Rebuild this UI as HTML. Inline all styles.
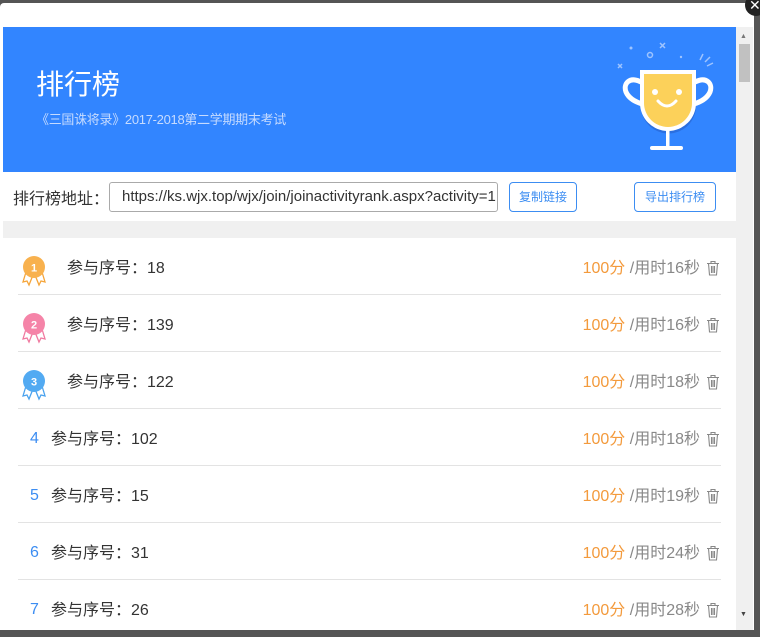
<!DOCTYPE html>
<html><head><meta charset="utf-8"><style>
*{margin:0;padding:0;box-sizing:border-box}
html,body{width:760px;height:630px}
body{background:#555;position:relative;overflow:hidden;font-family:"Liberation Sans","Noto Sans CJK SC",sans-serif}
.dlg{position:absolute;left:0;top:3px;width:754px;height:627px;background:#fff;border-radius:4px 4px 0 0}
.hdr{position:absolute;left:3px;top:27px;width:733px;height:145px;background:#3285ff}
.t1{position:absolute;left:33px;top:36px;color:#fff;font-size:28px}
.t2{position:absolute;left:33px;top:82px;color:#c6dbff;font-size:13px;letter-spacing:-0.3px}
.tb{position:absolute;left:13px;top:185px;font-size:16px;color:#333}
.inp{position:absolute;left:109px;top:182px;width:389px;height:30px;border:1px solid #aaa;border-radius:3px;font-size:15px;line-height:28px;color:#333;padding:0 0 0 12px;white-space:nowrap;overflow:hidden}
.btn{position:absolute;top:182px;height:30px;border:1px solid #3c8df2;border-radius:4px;color:#3c8df2;font-size:12px;text-align:center;line-height:28px}
.strip{position:absolute;left:3px;top:221px;width:733px;height:17px;background:#f0f0f0}
.sb{position:absolute;left:736px;top:27px;width:17px;height:603px;background:#f0f0f0}
.row{position:absolute;left:18px;width:703px;height:57px;border-bottom:1px solid #e3e3e3}
.nm{position:absolute;top:16px;font-size:16px;color:#333}
.num{position:absolute;left:12px;top:21px;font-size:16px;color:#3c8df2}
.sc{position:absolute;right:21px;top:16px;font-size:16px;color:#888}
.sc b{font-weight:normal;color:#f39a3c}
.tr{position:absolute;right:1px;top:22px;font-size:0}
.md{position:absolute;left:3px;top:16px}
</style></head><body>
<div class="dlg"></div>
<div style="position:absolute;left:745px;top:-6px;width:22px;height:22px;border-radius:50%;background:#222;color:#fff;font-size:14px;line-height:22px;padding-left:4px">✕</div>
<div class="hdr">
<div class="t1">排行榜</div>
<div class="t2">《三国诛将录》2017-2018第二学期期末考试</div>
<svg style="position:absolute;left:600px;top:10px" width="120" height="130" viewBox="600 37 120 130">
<g fill="none" stroke="#9ec4ff" stroke-width="1.5"><circle cx="647" cy="55" r="2.5"/><path d="M657 43l5 5M662 43l-5 5M615 64l4 4M619 64l-4 4M697 60l3-6M702 62l5-5M704 66l6-3"/></g>
<circle cx="628" cy="48" r="1.5" fill="#9ec4ff"/><circle cx="678" cy="57" r="1.2" fill="#9ec4ff"/>
<path d="M638 68h55v35a27.5 27.5 0 0 1-55 0z" fill="#2b6fe0" transform="translate(0 3)"/>
<path d="M638 82c-12-6-18 2-15 10 3 7 10 10 16 12M692 82c12-6 18 2 15 10-3 7-10 10-16 12" fill="none" stroke="#fff" stroke-width="5" stroke-linecap="round"/>
<path d="M637 70h56v33a28 28 0 0 1-56 0z" fill="#fff"/>
<path d="M641 74h48v29a24 24 0 0 1-48 0z" fill="#fcd15a"/>
<circle cx="652" cy="92" r="3" fill="#fff"/><circle cx="676" cy="92" r="3" fill="#fff"/>
<path d="M655 101q9 10 18 0" fill="none" stroke="#fff" stroke-width="3" stroke-linecap="round"/>
<rect x="663" y="130" width="3.5" height="18" fill="#fff"/><rect x="647" y="146" width="33" height="4" rx="2" fill="#fff"/>
</svg>
</div>
<div class="tb">排行榜地址：</div>
<div class="inp">https://ks.wjx.top/wjx/join/joinactivityrank.aspx?activity=1</div>
<div class="btn" style="left:509px;width:68px">复制链接</div>
<div class="btn" style="left:634px;width:82px">导出排行榜</div>
<div class="strip"></div>
<div class="sb"><div style="position:absolute;left:3px;top:17px;width:11px;height:38px;background:#c1c1c1"></div>
<div style="position:absolute;left:4px;top:6px;font-size:7px;color:#777">▲</div>
<div style="position:absolute;left:4px;top:584px;font-size:7px;color:#444">▼</div></div>
<svg width="0" height="0" style="position:absolute"><defs><symbol id="bin" viewBox="0 0 14 16"><path d="M1 3.5h12M5 3.5V1.5h4v2M2.5 3.5l1 11.5h7l1-11.5M5.5 6v7M7 6v7M8.5 6v7" fill="none" stroke="#888" stroke-width="1.1"/></symbol></defs></svg>

<div class="row" style="top:238px"><svg class="md" width="26" height="34" viewBox="0 0 26 34"><path d="M5 18l-3 10 4-1 2 4 4-10M21 18l3 10-4-1-2 4-4-10" fill="none" stroke="#f5a53a" stroke-width="1.3"/><circle cx="13" cy="13" r="11" fill="#f8b14e"/><text x="13" y="17.5" font-size="11" fill="#fff" text-anchor="middle" font-weight="bold" font-family="Liberation Sans">1</text></svg><span class="nm" style="left:49px">参与序号：18</span><span class="sc"><b>100分</b> /用时16秒</span><span class="tr"><svg width="14" height="16"><use href="#bin"/></svg></span></div>
<div class="row" style="top:295px"><svg class="md" width="26" height="34" viewBox="0 0 26 34"><path d="M5 18l-3 10 4-1 2 4 4-10M21 18l3 10-4-1-2 4-4-10" fill="none" stroke="#f07aa0" stroke-width="1.3"/><circle cx="13" cy="13" r="11" fill="#f584a8"/><text x="13" y="17.5" font-size="11" fill="#fff" text-anchor="middle" font-weight="bold" font-family="Liberation Sans">2</text></svg><span class="nm" style="left:49px">参与序号：139</span><span class="sc"><b>100分</b> /用时16秒</span><span class="tr"><svg width="14" height="16"><use href="#bin"/></svg></span></div>
<div class="row" style="top:352px"><svg class="md" width="26" height="34" viewBox="0 0 26 34"><path d="M5 18l-3 10 4-1 2 4 4-10M21 18l3 10-4-1-2 4-4-10" fill="none" stroke="#4aa2ee" stroke-width="1.3"/><circle cx="13" cy="13" r="11" fill="#52aaf2"/><text x="13" y="17.5" font-size="11" fill="#fff" text-anchor="middle" font-weight="bold" font-family="Liberation Sans">3</text></svg><span class="nm" style="left:49px">参与序号：122</span><span class="sc"><b>100分</b> /用时18秒</span><span class="tr"><svg width="14" height="16"><use href="#bin"/></svg></span></div>
<div class="row" style="top:409px"><span class="num">4</span><span class="nm" style="left:33px">参与序号：102</span><span class="sc"><b>100分</b> /用时18秒</span><span class="tr"><svg width="14" height="16"><use href="#bin"/></svg></span></div>
<div class="row" style="top:466px"><span class="num">5</span><span class="nm" style="left:33px">参与序号：15</span><span class="sc"><b>100分</b> /用时19秒</span><span class="tr"><svg width="14" height="16"><use href="#bin"/></svg></span></div>
<div class="row" style="top:523px"><span class="num">6</span><span class="nm" style="left:33px">参与序号：31</span><span class="sc"><b>100分</b> /用时24秒</span><span class="tr"><svg width="14" height="16"><use href="#bin"/></svg></span></div>
<div class="row" style="top:580px;border:none"><span class="num">7</span><span class="nm" style="left:33px">参与序号：26</span><span class="sc"><b>100分</b> /用时28秒</span><span class="tr"><svg width="14" height="16"><use href="#bin"/></svg></span></div>
</body></html>
